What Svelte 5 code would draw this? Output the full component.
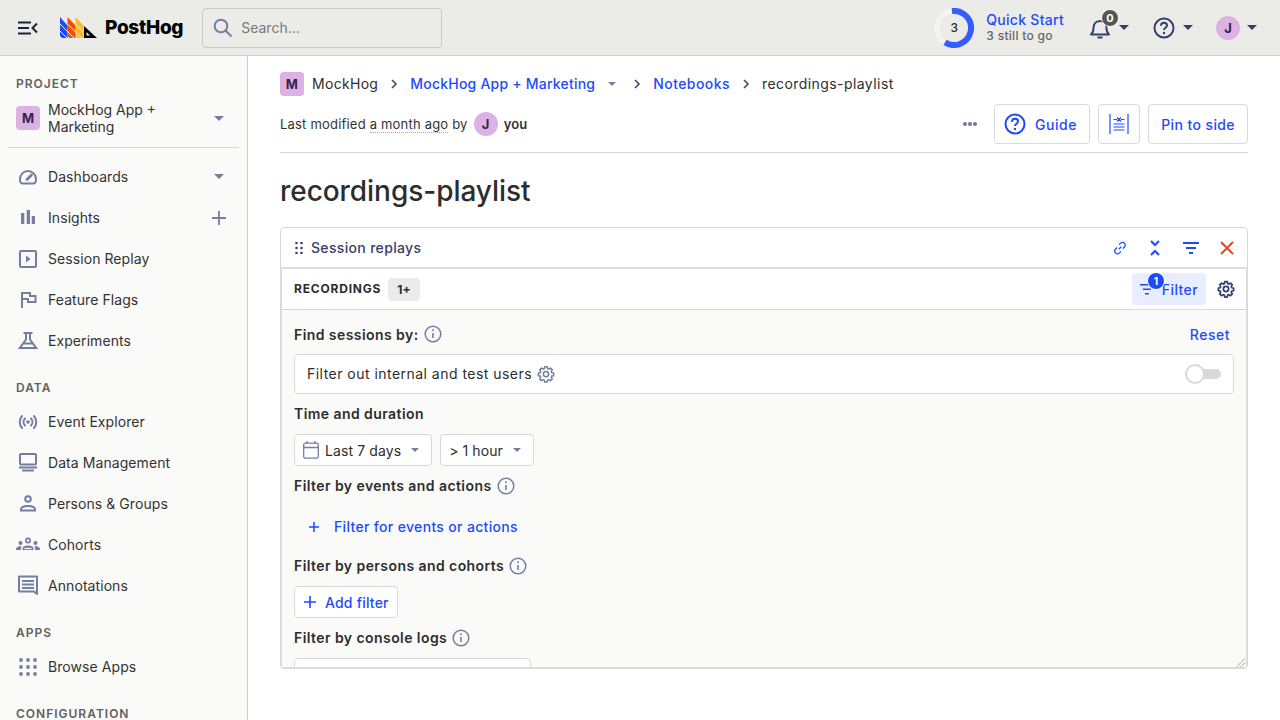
<script lang="ts">
	const groups = [
		{
			label: 'Data',
			items: [
				{ name: 'Event Explorer', icon: 'events' },
				{ name: 'Data Management', icon: 'data' },
				{ name: 'Persons & Groups', icon: 'person' },
				{ name: 'Cohorts', icon: 'cohort' },
				{ name: 'Annotations', icon: 'note' }
			]
		},
		{ label: 'Apps', items: [{ name: 'Browse Apps', icon: 'apps' }] }
	];
	const top = [
		{ name: 'Dashboards', icon: 'gauge', side: 'caret' },
		{ name: 'Insights', icon: 'bars', side: 'plus' },
		{ name: 'Session Replay', icon: 'replay' },
		{ name: 'Feature Flags', icon: 'flag' },
		{ name: 'Experiments', icon: 'flask' }
	];
	const gearPath =
		'M10.3 2.300h3.400l.5 2.500 1.600.7 2.200-1.400 2.400 2.400-1.400 2.200.7 1.600 2.500.5v3.400l-2.500.5-.7 1.600 1.400 2.200-2.400 2.400-2.200-1.400-1.600.7-.5 2.500h-3.400l-.5-2.500-1.600-.7-2.200 1.400-2.400-2.400 1.400-2.200-.7-1.600-2.500-.5v-3.400l2.500-.5.7-1.600-1.400-2.200 2.400-2.400 2.200 1.400 1.600-.7z';
</script>

{#snippet navIcon(kind: string)}
	<svg class="nav-icon" viewBox="0 0 24 24" fill="none" stroke="currentColor" stroke-width="2">
		{#if kind === 'gauge'}
			<path d="M6.500 18.500h11c1.200 0 1.700-.5 2-1.400.3-1 .5-2 .5-3.100a8 8 0 0 0-16 0c0 1.100.2 2.100.5 3.100.3.900.8 1.400 2 1.400z" />
			<path d="M11 14.500l4.500-4.500" stroke-width="2.600" stroke-linecap="round" />
		{:else if kind === 'bars'}
			<path d="M5 7h3.300v11H5zM10.700 4H14v14h-3.300zM15.700 10H19v8h-3.300z" fill="currentColor" stroke="none" />
		{:else if kind === 'replay'}
			<rect x="4" y="4" width="16" height="16" rx="1" />
			<path d="M10 8.500l4.500 3.500-4.500 3.500z" fill="currentColor" stroke="none" />
		{:else if kind === 'flag'}
			<path d="M6 20V5h8v3h5.500v6H12v-3H6" />
		{:else if kind === 'flask'}
			<path d="M7.500 4h9M10 4v6.500L3.800 19h16.400L14 10.500V4M7.500 14.500h9" />
		{:else if kind === 'events'}
			<circle cx="12" cy="12" r="1.800" fill="currentColor" stroke="none" />
			<path d="M9 8.500a5 5 0 0 0 0 7M15 8.500a5 5 0 0 1 0 7M6 6a9 9 0 0 0 0 12M18 6a9 9 0 0 1 0 12" stroke-linecap="round" />
		{:else if kind === 'data'}
			<rect x="4" y="3" width="16" height="10.500" rx="1" />
			<path d="M3 16.500h18M6 19.500h12" />
		{:else if kind === 'person'}
			<circle cx="12" cy="7" r="2.800" />
			<path d="M5 18.500v-1c0-2.500 3.500-3.500 7-3.500s7 1 7 3.500v1z" />
		{:else if kind === 'cohort'}
			<g fill="currentColor" stroke="none">
				<circle cx="12" cy="7.500" r="3" />
				<path d="M6.500 17v-1.500c0-2 2.800-3 5.500-3s5.500 1 5.500 3V17z" />
				<circle cx="4.500" cy="10" r="2" />
				<circle cx="19.500" cy="10" r="2" />
				<path d="M0 17v-1c0-1.500 2-3 5.500-3-.4.700-.6 1.400-.6 2.200V17zM24 17v-1c0-1.500-2-3-5.500-3 .4.700.6 1.400.6 2.200V17z" />
			</g>
			<circle cx="12" cy="7.500" r="1.300" fill="#fafaf9" stroke="none" />
			<path d="M8.500 15.500h7" stroke="#fafaf9" stroke-width="1.200" />
		{:else if kind === 'note'}
			<path d="M3 2.500h18v17.500l-3-2.500H3z" stroke-linejoin="round" />
			<path d="M6 7h12M6 10.500h12M6 14h12" />
		{:else if kind === 'apps'}
			<g fill="currentColor" stroke="none">
				{#each [5, 12, 19] as cy}
					{#each [5, 12, 19] as cx}
						<circle {cx} {cy} r="1.900" />
					{/each}
				{/each}
			</g>
		{/if}
	</svg>
{/snippet}

{#snippet info()}
	<svg class="info" viewBox="0 0 18 18" fill="none" stroke="currentColor" stroke-width="1.500">
		<circle cx="9" cy="9" r="7.800" />
		<path d="M9 8v5" stroke-width="1.600" />
		<circle cx="9" cy="5.300" r="1" fill="currentColor" stroke="none" />
	</svg>
{/snippet}

{#snippet caret()}
	<span class="caret"></span>
{/snippet}

{#snippet chevron()}
	<svg class="chevron" viewBox="0 0 8 10" fill="none" stroke="currentColor" stroke-width="1.500">
		<path d="M2 1l4 4-4 4" />
	</svg>
{/snippet}

<div class="page">
	<header class="topbar">
		<div class="top-left">
			<button class="menu" aria-label="Toggle menu">
				<svg width="20" height="14" viewBox="0 0 20 14" fill="none" stroke="#1f2137" stroke-width="2">
					<path d="M0 1.500h13M0 7h11M0 12.500h13M19 2.500l-4.500 4.500 4.500 4.500" />
				</svg>
			</button>
			<div class="logo">
				<svg width="38" height="21" viewBox="0 0 38 21">
					<path d="M0 0l7.500 8.500V21H2l-2-2z" fill="#1d4aff" />
					<path d="M7.500 0l8 8.500V21H9.500L7.500 19z" fill="#f54e00" />
					<path d="M15.500 0l8 8.500V21H18l-2.500-2.500z" fill="#f9bd2b" />
					<path d="M0 7l14 14M0 14l7 7M7.500 7l14 14M15.500 7l8 8" stroke="#ebebe7" stroke-width="1" fill="none" />
					<path d="M24 9l13 12H24z" fill="#000" />
					<path d="M26.500 15l3.500 3.500h-3.500z" fill="#ebebe7" />
				</svg>
				<span class="wordmark">PostHog</span>
			</div>
			<label class="search">
				<svg width="20" height="20" viewBox="0 0 20 20" fill="none" stroke="#747ea1" stroke-width="2">
					<circle cx="8" cy="8" r="6.300" />
					<path d="M12.500 12.500l6 6" />
				</svg>
				<span>Search...</span>
			</label>
		</div>
		<div class="top-right">
			<div class="quick">
				<div class="ring">
					<svg width="40" height="40" viewBox="0 0 40 40" fill="none" stroke-width="6">
						<circle cx="20" cy="20" r="17" stroke="#f3f3f1" />
						<path d="M18 3.100a17 17 0 1 1-7 31.300" stroke="#345cff" />
					</svg>
					<span>3</span>
				</div>
				<div class="quick-text">
					<div class="quick-title">Quick Start</div>
					<div class="quick-sub">3 still to go</div>
				</div>
			</div>
			<div class="bell">
				<svg width="20" height="22" viewBox="0 0 20 22" fill="none" stroke="#35416b" stroke-width="2">
					<path d="M1 17.500c2-1.500 2.500-3 2.500-6.500s2-7 6.500-7 6.500 3.500 6.500 7 .5 5 2.500 6.500z" stroke-linejoin="round" />
					<path d="M7.500 20.500h5" />
				</svg>
				<span class="bell-count">0</span>
				{@render caret()}
			</div>
			<div class="help">
				<svg width="22" height="22" viewBox="0 0 22 22" fill="none" stroke="#35416b" stroke-width="2">
					<circle cx="11" cy="11" r="9.500" />
					<path d="M8 8.700c0-1.800 1.300-3 3-3s3 1.100 3 2.700c0 2.300-3 2.300-3 4.600" />
					<circle cx="11" cy="16" r="1.200" fill="#35416b" stroke="none" />
				</svg>
				{@render caret()}
			</div>
			<div class="me">
				<span class="avatar round">J</span>
				{@render caret()}
			</div>
		</div>
	</header>

	<div class="body">
		<aside class="sidebar">
			<div class="section-label first">Project</div>
			<div class="project">
				<span class="avatar">M</span>
				<span class="project-name">MockHog App + Marketing</span>
				{@render caret()}
			</div>
			<div class="divider"></div>
			<nav>
				{#each top as item}
					<div class="nav-item">
						{@render navIcon(item.icon)}
						<span class="nav-name">{item.name}</span>
						{#if item.side === 'caret'}
							{@render caret()}
						{:else if item.side === 'plus'}
							<svg class="side-plus" viewBox="0 0 16 16" stroke="currentColor" stroke-width="1.800">
								<path d="M8 1v14M1 8h14" />
							</svg>
						{/if}
					</div>
				{/each}
				{#each groups as group}
					<div class="section-label">{group.label}</div>
					{#each group.items as item}
						<div class="nav-item">
							{@render navIcon(item.icon)}
							<span class="nav-name">{item.name}</span>
						</div>
					{/each}
				{/each}
				<div class="section-label">Configuration</div>
			</nav>
		</aside>

		<main class="main">
			<div class="crumbs">
				<span class="avatar">M</span>
				<span class="crumb">MockHog</span>
				{@render chevron()}
				<span class="crumb link">MockHog App + Marketing</span>
				<span class="caret small"></span>
				{@render chevron()}
				<span class="crumb link wide">Notebooks</span>
				{@render chevron()}
				<span class="crumb wide">recordings-playlist</span>
			</div>
			<div class="meta-row">
				<div class="meta">
					<span>Last modified <span class="dotted">a month ago</span> by</span>
					<span class="avatar round">J</span>
					<span class="you">you</span>
				</div>
				<div class="actions">
					<span class="more"><i></i><i></i><i></i></span>
					<button class="btn guide">
						<svg width="22" height="22" viewBox="0 0 22 22" fill="none" stroke="#1d4aff" stroke-width="2">
							<circle cx="11" cy="11" r="9.500" />
							<path d="M8 8.700c0-1.800 1.300-3 3-3s3 1.100 3 2.700c0 2.300-3 2.300-3 4.600" />
							<circle cx="11" cy="16" r="1.200" fill="#1d4aff" stroke="none" />
						</svg>
						Guide
					</button>
					<button class="btn icon-btn" aria-label="Toggle width">
						<svg width="20" height="20" viewBox="0 0 20 20" fill="none" stroke="#1d4aff" stroke-width="1.200">
							<path d="M1 0v20M19 0v20M4.500 10h11M4.500 13h11M4.500 16h11" />
							<path d="M4.500 5.500h3.500M15.500 5.500H12M8 3.500l2 2-2 2M12 3.500l-2 2 2 2" />
						</svg>
					</button>
					<button class="btn">Pin to side</button>
				</div>
			</div>
			<h1>recordings-playlist</h1>

			<section class="node">
				<div class="node-head">
					<div class="node-title">
						<svg width="8" height="12" viewBox="0 0 8 12" fill="#35416b">
							{#each [1, 6, 11] as cy}
								<circle cx="1.500" {cy} r="1.300" />
								<circle cx="6.500" {cy} r="1.300" />
							{/each}
						</svg>
						Session replays
					</div>
					<div class="node-tools">
						<svg width="14" height="14" viewBox="0 0 14 14" fill="none" stroke="#1d4aff" stroke-width="1.300">
							<path d="M5.800 8.200l2.400-2.400M6 3.600l1.500-1.500a2.700 2.700 0 0 1 3.900 3.900L9.900 7.500M8 10.400l-1.500 1.500a2.700 2.700 0 0 1-3.900-3.900l1.500-1.500" />
						</svg>
						<svg width="14" height="16" viewBox="0 0 14 16" fill="none" stroke="#1d4aff" stroke-width="2">
							<path d="M3 1l4 4 4-4M3 15l4-4 4 4" />
						</svg>
						<svg width="16" height="12" viewBox="0 0 16 12" fill="#1d4aff">
							<path d="M0 0h16v2H0zM3 5h10v2H3zM6 10h4v2H6z" />
						</svg>
						<svg width="14" height="14" viewBox="0 0 14 14" stroke="#e5401b" stroke-width="1.800">
							<path d="M1 1l12 12M13 1L1 13" />
						</svg>
					</div>
				</div>
				<div class="playlist">
					<div class="pl-head">
						<div class="pl-title">
							<span class="rec">Recordings</span>
							<span class="count">1+</span>
						</div>
						<div class="pl-tools">
							<button class="filter-btn">
								<svg width="14" height="12" viewBox="0 0 14 12" fill="#1d4aff">
									<path d="M0 1h14v1.500H0zM3 5.500h8V7H3zM5 10h4v1.500H5z" />
								</svg>
								<span class="badge">1</span>
								Filter
							</button>
							<svg class="gear dark" viewBox="0 0 24 24" fill="none" stroke="currentColor" stroke-width="2.300">
								<path d={gearPath} stroke-linejoin="round" />
								<circle cx="12" cy="12" r="3.500" />
							</svg>
						</div>
					</div>
					<div class="filters">
						<div class="row-between">
							<div class="label">Find sessions by: {@render info()}</div>
							<span class="reset">Reset</span>
						</div>
						<div class="toggle-box">
							<div class="toggle-label">
								Filter out internal and test users
								<svg class="gear" viewBox="0 0 24 24" fill="none" stroke="currentColor" stroke-width="2">
									<path d={gearPath} stroke-linejoin="round" />
									<circle cx="12" cy="12" r="3.500" />
								</svg>
							</div>
							<span class="switch"><i></i></span>
						</div>
						<div class="label time">Time and duration</div>
						<div class="selects">
							<div class="select">
								<svg width="16" height="18" viewBox="0 0 16 18" fill="none" stroke="#747ea1" stroke-width="1.300">
									<rect x="0.700" y="2.200" width="14.600" height="15" rx="1.500" />
									<path d="M1 6.500h14M4 0v3M12 0v3" />
								</svg>
								<span>Last 7 days</span>
								<span class="caret small"></span>
							</div>
							<div class="select">
								<span>&gt; 1 hour</span>
								<span class="caret small"></span>
							</div>
						</div>
						<div class="label events">Filter by events and actions {@render info()}</div>
						<div class="add-events">
							<svg width="12" height="12" viewBox="0 0 12 12" stroke="#1d4aff" stroke-width="1.500">
								<path d="M6 1v10M1 6h10" />
							</svg>
							<span class="nudge">Filter for events or actions</span>
						</div>
						<div class="label persons">Filter by persons and cohorts {@render info()}</div>
						<button class="add-filter">
							<svg width="14" height="14" viewBox="0 0 14 14" stroke="#1d4aff" stroke-width="1.600">
								<path d="M7 1v12M1 7h12" />
							</svg>
							Add filter
						</button>
						<div class="label logs">Filter by console logs {@render info()}</div>
						<div class="logs-box"></div>
					</div>
					<svg class="grip" width="10" height="10" viewBox="0 0 10 10" stroke="#555" stroke-width="1" stroke-dasharray="1 1">
						<path d="M1 9.500L9.500 1M5 9.500L9.500 5" />
					</svg>
				</div>
			</section>
		</main>
	</div>
</div>

<style>
	:global(body) {
		font-family: Inter, 'Noto Sans', sans-serif;
		color: #2d2d2d;
		background: #fff;
	}
	button {
		font: inherit;
		cursor: pointer;
	}
	.page {
		height: 720px;
		display: flex;
		flex-direction: column;
		overflow: hidden;
	}
	.topbar {
		height: 56px;
		flex: none;
		box-sizing: border-box;
		display: flex;
		align-items: center;
		justify-content: space-between;
		background: #ebebe7;
		border-bottom: 1px solid #cfcfcb;
		padding: 0 23px 0 18px;
	}
	.top-left,
	.top-right {
		display: flex;
		align-items: center;
	}
	.menu {
		background: none;
		border: 0;
		padding: 0;
		width: 20px;
		height: 14px;
		display: flex;
	}
	.logo {
		display: flex;
		align-items: flex-end;
		margin-left: 22px;
		gap: 7px;
	}
	.wordmark {
		font-size: 19px;
		line-height: 21px;
		font-weight: 800;
		color: #000;
		letter-spacing: -0.3px;
	}
	.search {
		width: 240px;
		height: 40px;
		box-sizing: border-box;
		margin-left: 19px;
		border: 1px solid #c9c9c5;
		border-radius: 4px;
		display: flex;
		align-items: center;
		gap: 8px;
		padding-left: 10px;
		font-size: 14px;
		color: #7a7a78;
	}
	.quick {
		display: flex;
		align-items: center;
		gap: 12px;
	}
	.ring {
		position: relative;
		width: 40px;
		height: 40px;
		display: flex;
		align-items: center;
		justify-content: center;
	}
	.ring svg {
		position: absolute;
		inset: 0;
	}
	.ring span {
		position: relative;
		font-size: 12px;
		font-weight: 500;
	}
	.quick-text {
		margin-top: -2px;
	}
	.quick-title {
		font-size: 14px;
		line-height: 18px;
		font-weight: 500;
		letter-spacing: 0.28px;
		color: #1d4aff;
	}
	.quick-sub {
		font-size: 12px;
		line-height: 14px;
		font-weight: 500;
		letter-spacing: 0.3px;
		color: #666;
	}
	.bell {
		position: relative;
		display: flex;
		align-items: center;
		margin-left: 26px;
		gap: 9px;
	}
	.bell-count {
		position: absolute;
		left: 11px;
		top: -8px;
		width: 16px;
		height: 16px;
		box-sizing: content-box;
		border: 1px solid #fff;
		border-radius: 50%;
		background: #555;
		color: #fff;
		font-size: 11px;
		font-weight: 700;
		line-height: 16px;
		text-align: center;
	}
	.help {
		display: flex;
		align-items: center;
		margin-left: 24px;
		gap: 8px;
	}
	.me {
		display: flex;
		align-items: center;
		margin-left: 23px;
		gap: 7px;
	}
	.caret {
		width: 0;
		height: 0;
		flex: none;
		border-left: 5px solid transparent;
		border-right: 5px solid transparent;
		border-top: 5px solid currentColor;
	}
	.top-right .caret {
		color: #35416b;
	}
	.caret.small {
		border-left-width: 4px;
		border-right-width: 4px;
		border-top-width: 4px;
		color: #747ea1;
	}
	.avatar {
		width: 24px;
		height: 24px;
		flex: none;
		border-radius: 4px;
		background: #dcb1e3;
		color: #35234b;
		font-size: 13px;
		font-weight: 700;
		display: flex;
		align-items: center;
		justify-content: center;
	}
	.avatar.round {
		border-radius: 50%;
	}
	.body {
		flex: 1;
		display: flex;
		min-height: 0;
	}
	.sidebar {
		width: 248px;
		flex: none;
		box-sizing: border-box;
		background: #fafaf9;
		border-right: 1px solid #d0d0d0;
		padding: 0 8px;
		overflow: hidden;
	}
	.section-label {
		font-size: 12px;
		line-height: 16px;
		font-weight: 600;
		letter-spacing: 1px;
		text-transform: uppercase;
		color: #5f5f5f;
		padding: 19px 8px 5px;
	}
	.section-label.first {
		padding: 20px 8px 0;
	}
	.project {
		display: flex;
		align-items: center;
		gap: 8px;
		padding: 0 8px;
		height: 36px;
		margin-top: 8px;
		font-size: 14px;
		line-height: 17px;
		color: #333;
	}
	.project-name {
		flex: 1;
		padding-right: 30px;
	}
	.project .caret,
	.nav-item .caret {
		color: #747ea1;
		margin-right: 7px;
	}
	.divider {
		height: 1px;
		background: #d5d5d5;
		margin: 11px 0 8px;
	}
	.nav-item {
		height: 41px;
		display: flex;
		align-items: center;
		gap: 8px;
		padding: 0 8px;
		font-size: 14px;
		letter-spacing: 0.07px;
		color: #333;
	}
	.nav-icon {
		width: 24px;
		height: 24px;
		flex: none;
		color: #747ea1;
	}
	.nav-name {
		flex: 1;
	}
	.side-plus {
		width: 16px;
		height: 16px;
		color: #747ea1;
		margin-right: 4px;
	}
	.main {
		flex: 1;
		min-width: 0;
		padding: 16px 32px 0;
	}
	.crumbs {
		height: 24px;
		display: flex;
		align-items: center;
		font-size: 14px;
		gap: 8px;
		letter-spacing: 0.3px;
	}
	.crumb {
		padding-bottom: 2px;
	}
	.crumbs .chevron {
		width: 8px;
		height: 10px;
		color: #35416b;
		margin: 0 4px;
	}
	.crumb.link {
		color: #1d4aff;
		font-weight: 500;
		letter-spacing: 0.22px;
	}
	.crumb.wide {
		letter-spacing: 0.43px;
	}
	.crumbs .caret.small {
		margin: 0 5px;
	}
	.meta-row {
		height: 40px;
		margin-top: 8px;
		display: flex;
		align-items: center;
		justify-content: space-between;
		padding-bottom: 8px;
		border-bottom: 1px solid #d8d8d8;
	}
	.meta {
		display: flex;
		align-items: center;
		gap: 6px;
		font-size: 13px;
		letter-spacing: 0.2px;
		color: #333;
	}
	.dotted {
		border-bottom: 1px dotted #aaa;
	}
	.you {
		font-weight: 600;
	}
	.actions {
		display: flex;
		align-items: center;
		gap: 8px;
	}
	.more {
		display: flex;
		gap: 1.500px;
		margin-right: 9px;
	}
	.more i {
		width: 3.500px;
		height: 3.500px;
		border-radius: 50%;
		background: #747ea1;
	}
	.btn {
		height: 40px;
		box-sizing: border-box;
		background: #fff;
		border: 1px solid #d9d9d9;
		border-radius: 4px;
		color: #1d4aff;
		font-size: 14px;
		font-weight: 500;
		letter-spacing: 0.4px;
		padding: 0 12px;
		display: flex;
		align-items: center;
	}
	.btn.guide {
		gap: 9px;
		padding: 0 12px 0 9px;
		letter-spacing: 0.6px;
	}
	.icon-btn {
		width: 42px;
		justify-content: center;
		padding: 0;
	}
	h1 {
		font-size: 28px;
		line-height: 38px;
		font-weight: 500;
		letter-spacing: -0.05px;
		margin: 19px 0 17px;
		color: #2d2d2d;
	}
	.node {
		height: 442px;
		box-sizing: border-box;
		border: 1px solid #d9d9d9;
		border-radius: 4px;
		display: flex;
		flex-direction: column;
		overflow: hidden;
	}
	.node-head {
		height: 39px;
		flex: none;
		display: flex;
		align-items: center;
		justify-content: space-between;
		padding: 0 13px 0 14px;
	}
	.node-title {
		display: flex;
		align-items: center;
		gap: 8px;
		font-size: 14px;
		font-weight: 500;
		letter-spacing: 0.33px;
		color: #35416b;
	}
	.node-tools {
		display: flex;
		align-items: center;
		gap: 21px;
	}
	.playlist {
		position: relative;
		flex: 1;
		min-height: 0;
		border: 2px solid #dcdcdc;
		border-right-width: 1px;
		border-left-width: 1px;
		border-bottom-width: 1px;
		display: flex;
		flex-direction: column;
		overflow: hidden;
		background: #fafaf9;
	}
	.pl-head {
		height: 40px;
		flex: none;
		background: #fff;
		border-bottom: 1px solid #d9d9d9;
		display: flex;
		align-items: center;
		justify-content: space-between;
		padding: 0 11px 0 12px;
	}
	.pl-title {
		display: flex;
		align-items: center;
		gap: 7px;
	}
	.rec {
		font-size: 12px;
		font-weight: 700;
		letter-spacing: 0.8px;
		text-transform: uppercase;
		padding-bottom: 2px;
	}
	.count {
		background: #ebebeb;
		border-radius: 4px;
		font-size: 12px;
		font-weight: 700;
		padding: 0 9px;
		line-height: 23px;
	}
	.pl-tools {
		display: flex;
		align-items: center;
		gap: 11px;
	}
	.filter-btn {
		position: relative;
		height: 32px;
		width: 74px;
		box-sizing: border-box;
		border: 0;
		border-radius: 4px;
		background: #e8edff;
		color: #1d4aff;
		font-size: 14px;
		font-weight: 500;
		letter-spacing: 0.4px;
		display: flex;
		align-items: center;
		gap: 8px;
		padding: 0 8px;
	}
	.badge {
		position: absolute;
		left: 16px;
		top: 0;
		width: 16px;
		height: 16px;
		border-radius: 50%;
		background: #1d4aff;
		box-shadow: 0 0 0 1px #fff;
		color: #fff;
		font-size: 10px;
		font-weight: 700;
		letter-spacing: 0;
		line-height: 16px;
		text-align: center;
	}
	.gear {
		width: 18px;
		height: 18px;
		color: #747ea1;
		flex: none;
	}
	.gear.dark {
		color: #35416b;
	}
	.filters {
		flex: 1;
		padding: 11px 12px 0;
		min-height: 0;
		overflow: hidden;
	}
	.row-between {
		display: flex;
		justify-content: space-between;
		align-items: center;
		height: 26px;
	}
	.label {
		display: flex;
		align-items: center;
		gap: 5px;
		font-size: 14px;
		font-weight: 600;
		letter-spacing: 0.43px;
		color: #2d2d2d;
	}
	.info {
		width: 18px;
		height: 18px;
		color: #747ea1;
		flex: none;
	}
	.reset {
		color: #1d4aff;
		font-size: 14px;
		font-weight: 500;
		letter-spacing: 0.5px;
		padding-right: 4px;
	}
	.toggle-box {
		height: 40px;
		box-sizing: border-box;
		margin-top: 7px;
		border: 1px solid #d9d9d9;
		border-radius: 4px;
		background: #fff;
		display: flex;
		align-items: center;
		justify-content: space-between;
		padding: 0 12px;
		font-size: 14px;
		letter-spacing: 0.47px;
	}
	.toggle-label {
		display: flex;
		align-items: center;
		gap: 5px;
		line-height: 18px;
	}
	.switch {
		position: relative;
		width: 36px;
		height: 20px;
		display: flex;
		align-items: center;
	}
	.switch::before {
		content: '';
		width: 100%;
		height: 10px;
		background: #d9d9d9;
		border-radius: 5px;
	}
	.switch i {
		position: absolute;
		left: 0;
		top: 0;
		width: 20px;
		height: 20px;
		box-sizing: border-box;
		border: 2px solid #d9d9d9;
		border-radius: 50%;
		background: #fff;
	}
	.time {
		margin-top: 10px;
		line-height: 20px;
	}
	.selects {
		display: flex;
		gap: 8px;
		margin-top: 10px;
	}
	.select {
		height: 32px;
		box-sizing: border-box;
		background: #fff;
		border: 1px solid #d9d9d9;
		border-radius: 4px;
		display: flex;
		align-items: center;
		gap: 6px;
		padding: 0 8px;
		font-size: 14px;
		letter-spacing: 0.1px;
	}
	.select .caret {
		margin: 0 4px;
	}
	.events {
		margin-top: 10px;
		line-height: 20px;
	}
	.add-events {
		height: 40px;
		margin-top: 11px;
		display: flex;
		align-items: center;
		gap: 14px;
		padding-left: 14px;
		font-size: 14px;
		font-weight: 500;
		letter-spacing: 0.33px;
		color: #1d4aff;
	}
	.nudge {
		padding-bottom: 2px;
	}
	.persons {
		margin-top: 9px;
		line-height: 20px;
	}
	.add-filter {
		height: 32px;
		margin-top: 10px;
		box-sizing: border-box;
		background: #fff;
		border: 1px solid #d9d9d9;
		border-radius: 4px;
		color: #1d4aff;
		font-size: 14px;
		font-weight: 500;
		letter-spacing: 0.2px;
		display: flex;
		align-items: center;
		gap: 8px;
		padding: 0 8px;
	}
	.logs {
		margin-top: 10px;
		line-height: 20px;
	}
	.logs-box {
		width: 237px;
		height: 40px;
		margin-top: 10px;
		box-sizing: border-box;
		background: #fff;
		border: 1px solid #d9d9d9;
		border-radius: 4px;
	}
	.grip {
		position: absolute;
		right: 0;
		bottom: 0;
	}
</style>
